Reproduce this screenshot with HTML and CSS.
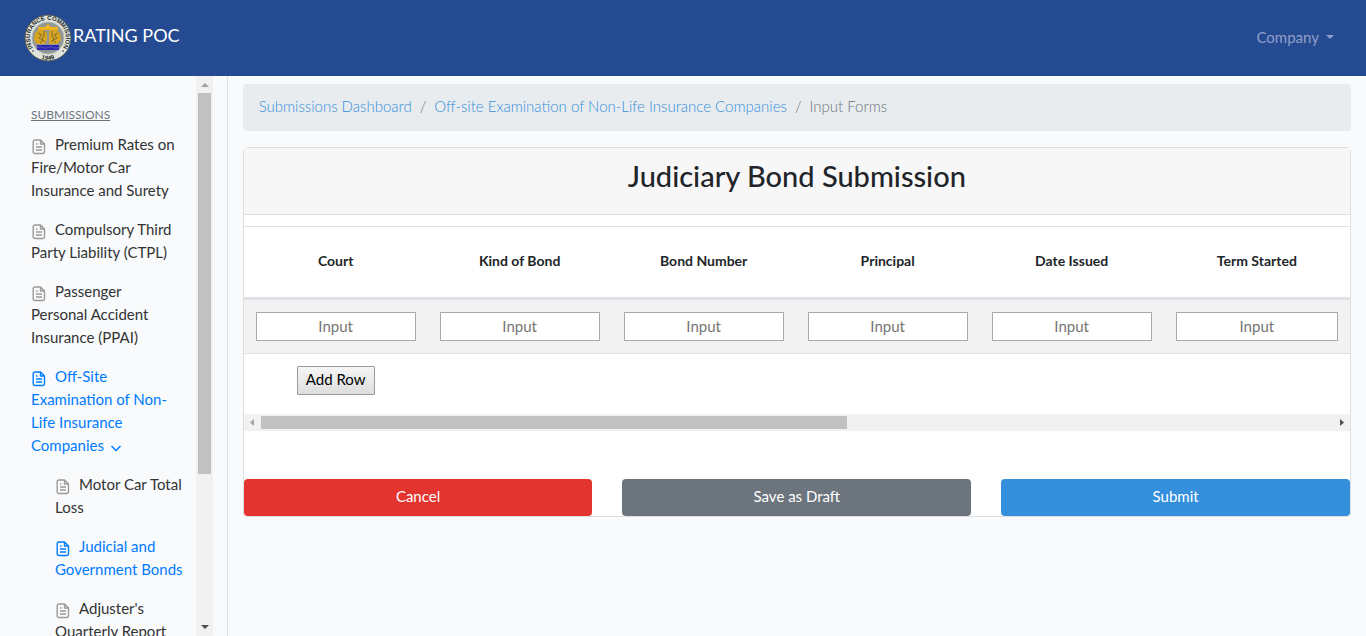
FILE: index.html
```html
<!DOCTYPE html>
<html lang="en">
<head>
<meta charset="utf-8">
<meta name="viewport" content="width=device-width, initial-scale=1">
<title>Judiciary Bond Submission</title>
<link rel="stylesheet" href="styles.css">
</head>
<body>
<svg class="sprite" aria-hidden="true">
  <symbol id="file" viewBox="0 0 14 16">
    <path d="M3 1h5.500l4 4v7.700a1.800 1.800 0 0 1-1.800 1.800H3a1.800 1.800 0 0 1-1.800-1.800V2.800A1.800 1.800 0 0 1 3 1zM8.500 1v4h4M4 5h1.500M4 8h6M4 11h6" fill="none" stroke="currentColor" stroke-width="1.400" stroke-linejoin="round"/>
  </symbol>
</svg>
<header class="navbar">
  <a class="brand" href="#">
    <svg class="seal" viewBox="0 0 48 48" aria-hidden="true">
      <defs><path id="ring" d="M11.300 36.700A18 18 0 1 1 36.700 36.700"/><path id="ring-low" d="M13 42.900A22 22 0 0 0 35 42.900"/></defs>
      <circle cx="24" cy="24" r="23" fill="#dfe3dc" stroke="#4c5550"/>
      <circle cx="24" cy="24" r="16" fill="#8f9693" stroke="#b4bab5"/>
      <path d="M14 13h7l3-3 3 3h7v3H14z" fill="#f0b41c"/>
      <path d="M16 15l-5 4-1 7 3 4h8l2-4 2 4h8l4-4-1-7-5-4-4 1-4 3-4-3z" fill="#d9a51f"/>
      <path d="M14 19l4 2-3 3 4 2-3 3M20 17v5l-2 3 3 3M34 19l-4 2 3 3-4 2 3 3M28 17v5l2 3-3 3" fill="none" stroke="#7c6d38" stroke-width="1"/>
      <path d="M23 17h2v13h-2z" fill="#8f9693"/>
      <path d="M13 31h22v5H13z" fill="#2b25b4"/>
      <path d="M13 33.500q3-1.500 5.500 0t5.500 0 5.500 0 5.500 0" fill="none" stroke="#6968b8" stroke-width=".8"/>
      <circle cx="9" cy="37" r=".8" fill="#252b28"/><circle cx="39" cy="37" r=".8" fill="#252b28"/>
      <g class="seal-text" text-anchor="middle"><text><textPath href="#ring" startOffset="50%">INSURANCE COMMISSION</textPath></text>
      <text><textPath href="#ring-low" startOffset="50%">1949</textPath></text></g>
    </svg>
    <span class="brand-name">RATING POC</span>
  </a>
  <button class="account" type="button">Company <span class="caret"></span></button>
</header>
<div class="layout">
  <aside class="sidebar">
    <nav class="menu" aria-label="Submissions">
      <h2 class="menu-title">SUBMISSIONS</h2>
      <ul class="menu-list">
        <li><a class="menu-link" href="#"><svg class="file"><use href="#file"/></svg>Premium Rates on Fire/Motor Car Insurance and Surety</a></li>
        <li><a class="menu-link" href="#"><svg class="file"><use href="#file"/></svg>Compulsory Third Party Liability (CTPL)</a></li>
        <li><a class="menu-link" href="#"><svg class="file"><use href="#file"/></svg>Passenger Personal Accident Insurance (PPAI)</a></li>
        <li><a class="menu-link active" href="#"><svg class="file"><use href="#file"/></svg>Off-Site Examination of Non-Life Insurance Companies <svg class="chevron" viewBox="0 0 12 12"><path d="M1.500 4L6 8.500 10.500 4" fill="none" stroke="currentColor" stroke-width="1.500"/></svg></a>
          <ul class="menu-list submenu">
            <li><a class="menu-link" href="#"><svg class="file"><use href="#file"/></svg>Motor Car Total Loss</a></li>
            <li><a class="menu-link active" href="#"><svg class="file"><use href="#file"/></svg>Judicial and Government Bonds</a></li>
            <li><a class="menu-link" href="#"><svg class="file"><use href="#file"/></svg>Adjuster's Quarterly Report</a></li>
          </ul>
        </li>
      </ul>
    </nav>
    <div class="vbar" aria-hidden="true"><svg class="arrow faded" viewBox="0 0 17 17"><path d="M5 11h8L9 7z"/></svg><div class="vthumb"></div><svg class="arrow" viewBox="0 0 17 17"><path d="M5 6h8l-4 4z"/></svg></div>
  </aside>
  <main class="content">
    <nav class="breadcrumb" aria-label="Breadcrumb">
      <a href="#">Submissions Dashboard</a><span>/</span><a href="#">Off-site Examination of Non-Life Insurance Companies</a><span>/</span><span>Input Forms</span>
    </nav>
    <form class="card">
      <div class="card-header"><h1>Judiciary Bond Submission</h1></div>
      <div class="table-wrap">
        <table>
          <thead><tr><th>Court</th><th>Kind of Bond</th><th>Bond Number</th><th>Principal</th><th>Date Issued</th><th>Term Started</th></tr></thead>
          <tbody>
            <tr class="entry">
              <td><input type="text" placeholder="Input" aria-label="Court"></td>
              <td><input type="text" placeholder="Input" aria-label="Kind of Bond"></td>
              <td><input type="text" placeholder="Input" aria-label="Bond Number"></td>
              <td><input type="text" placeholder="Input" aria-label="Principal"></td>
              <td><input type="text" placeholder="Input" aria-label="Date Issued"></td>
              <td><input type="text" placeholder="Input" aria-label="Term Started"></td>
            </tr>
            <tr><td><button class="add-row" type="button">Add Row</button></td></tr>
          </tbody>
        </table>
      </div>
      <div class="hbar" aria-hidden="true"><svg class="arrow faded" viewBox="0 0 17 17"><path d="M10 5v7L6 8.500z"/></svg><div class="htrack"><div class="hthumb"></div></div><svg class="arrow" viewBox="0 0 17 17"><path d="M7 5v7l4-3.500z"/></svg></div>
      <div class="actions">
        <button class="btn danger" type="button">Cancel</button>
        <button class="btn secondary" type="button">Save as Draft</button>
        <button class="btn primary" type="submit">Submit</button>
      </div>
    </form>
  </main>
</div>
</body>
</html>
```
FILE: styles.css
```css
* { box-sizing: border-box; }
body {
  margin: 0;
  height: 100vh;
  overflow: hidden;
  display: flex;
  flex-direction: column;
  background: #f8fafc;
  color: #212529;
  font: 15px/23px Lato, "Open Sans", sans-serif;
}
button, input { font: inherit; }
a { color: #3490dc; text-decoration: none; }
.sprite { display: none; }

.navbar {
  flex: none;
  height: 76px;
  padding: 0 32px 0 24px;
  display: flex;
  align-items: center;
  justify-content: space-between;
  background: #244a91;
}
.brand { display: flex; align-items: center; color: #fff; }
.seal { width: 48px; height: 48px; }
.seal-text { font: bold 6px "Liberation Sans", sans-serif; fill: #252b28; }
.brand-name { font-size: 18px; padding: 0 0 6px 1px; }
.account {
  display: flex;
  align-items: center;
  gap: 7px;
  padding: 0 0 2px;
  border: 0;
  background: none;
  color: #919fc8;
}
.caret { border: 4px solid transparent; border-top-color: currentColor; border-bottom: 0; }

.layout { flex: 1; min-height: 0; display: flex; }
.sidebar {
  flex: none;
  width: 16.6667%;
  padding: 0 14px 0 15px;
  display: flex;
  border-right: 1px solid #dee2e6;
}
.menu { flex: 1; min-width: 0; padding-top: 24px; overflow: hidden; }
.menu-title {
  margin: 4px 16px 0;
  color: #6c757d;
  font-size: 12px;
  font-weight: 400;
  line-height: 21px;
  text-decoration: underline;
}
.menu-list { margin: 0; padding: 0; list-style: none; }
.submenu { padding-left: 24px; }
.menu-link { display: block; padding: 8px 16px; color: #333; }
.submenu .menu-link { padding-right: 8px; }
.file { width: 16px; height: 16px; margin-right: 8px; color: #999; vertical-align: -5px; }
.menu-link.active, .active .file { color: #007bff; }
.chevron { width: 12px; height: 12px; margin-left: 2px; vertical-align: -3px; }

.vbar { flex: none; width: 17px; display: flex; flex-direction: column; background: #f1f1f1; }
.vthumb { height: 68%; margin: 0 2px; background: #c1c1c1; }
.vbar .arrow:last-child { margin-top: auto; }
.arrow { flex: none; width: 17px; height: 17px; fill: #505050; }
.arrow.faded { fill: #a3a3a3; }

.content { flex: 1; min-width: 0; padding: 8px 15px; }
.breadcrumb {
  display: flex;
  gap: 8px;
  padding: 11px 16px 13px;
  margin-bottom: 16px;
  border-radius: 4px;
  background: #e9ecef;
  color: #6c757d;
  font-weight: 300;
}
.card { border: 1px solid #dfdfdf; border-radius: 4px; background: #fff; }
.card-header { padding: 11px 20px 21px; border-bottom: 1px solid #dfdfdf; background: #f7f7f7; }
.card-header h1 { margin: 0; font-size: 29px; line-height: 34px; font-weight: 500; text-align: center; }
.table-wrap { padding: 11px 0 7px; overflow: hidden; }
table { width: 100%; table-layout: fixed; border-collapse: separate; border-spacing: 0; }
th {
  height: 74px;
  padding: 0 12px 4px;
  border-top: 1px solid #dee2e6;
  border-bottom: 3px solid #dee2e6;
  font-size: 14px;
  font-weight: 700;
}
th:not(:last-child) { width: 184px; }
td { padding: 12px; text-align: center; }
.entry td { background: #f2f2f2; border-bottom: 1px solid #dee2e6; }
td input {
  display: block;
  width: 100%;
  height: 29px;
  padding: 1px 2px 3px;
  border: 1px solid #a9a9a9;
  background: #fff;
  text-align: center;
}
td input::placeholder { color: #757575; }
.add-row {
  display: block;
  height: 29px;
  margin: 0 auto;
  padding: 0 8px 2px;
  border: 1px solid #999;
  border-radius: 1px;
  background: linear-gradient(#f6f6f6, #dddddd);
  color: #000;
}
.hbar { display: flex; background: #f1f1f1; }
.htrack { flex: 1; padding: 2px 0; }
.hthumb { width: 54.7%; height: 13px; background: #c1c1c1; }
.actions { display: grid; grid-template-columns: repeat(3, 1fr); gap: 30px; padding-top: 48px; }
.btn { height: 37px; padding: 0 12px 2px; border: 0; border-radius: 4px; color: #fff; }
.danger { background: #e3342f; }
.secondary { background: #6c757d; }
.primary { background: #3490dc; }
```
